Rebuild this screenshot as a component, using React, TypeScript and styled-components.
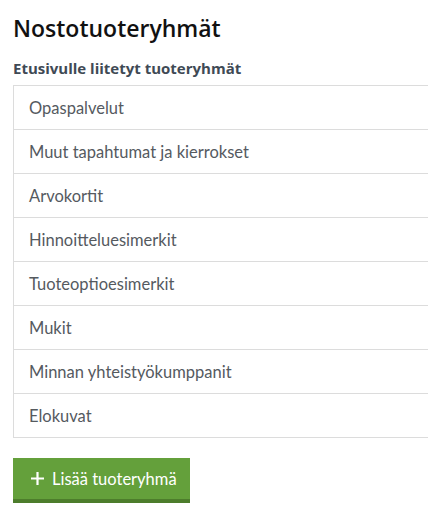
import React from 'react'
import styled, { createGlobalStyle } from 'styled-components'

const GlobalStyle = createGlobalStyle`
    body {
        margin: 0;
        background: #ffffff;
        font-family: "Open Sans", "Noto Sans", sans-serif;
    }
`

const Page = styled.div`
    padding: 12px 0 0 13px;
    width: 428px;
    box-sizing: border-box;
    overflow: hidden;
`

const Title = styled.h2`
    margin: 0;
    font-size: 23px;
    font-weight: 600;
    line-height: 32px;
    color: #111111;
`

const SubTitle = styled.h4`
    margin: 14px 0 0;
    font-size: 15px;
    font-weight: 700;
    line-height: 20px;
    color: #3f4a55;
`

const GroupList = styled.ul`
    list-style: none;
    margin: 7px 0 0;
    padding: 0;
    width: 440px;
    border-top: 1px solid #dcdcdc;
    border-left: 1px solid #dcdcdc;
`

const GroupItem = styled.li`
    height: 43px;
    display: flex;
    align-items: center;
    padding-left: 15px;
    border-bottom: 1px solid #dcdcdc;
    font-family: Lato, "Open Sans", sans-serif;
    font-size: 16.5px;
    color: #555a5f;
`

const AddButton = styled.button`
    margin-top: 20px;
    height: 45px;
    width: 177px;
    display: flex;
    align-items: center;
    gap: 8px;
    padding: 0 0 0 18px;
    background: #64a03b;
    border: none;
    border-bottom: 4px solid #4d7d2c;
    color: #ffffff;
    font-family: Lato, "Open Sans", sans-serif;
    font-size: 16.5px;
    cursor: pointer;
`

const PlusIcon = styled.svg`
    width: 13px;
    height: 13px;
`

const groups = [
    'Opaspalvelut',
    'Muut tapahtumat ja kierrokset',
    'Arvokortit',
    'Hinnoitteluesimerkit',
    'Tuoteoptioesimerkit',
    'Mukit',
    'Minnan yhteistyökumppanit',
    'Elokuvat',
]

const App: React.FC = () => {
    return (
        <>
            <GlobalStyle />
            <Page>
                <Title>Nostotuoteryhmät</Title>
                <SubTitle>Etusivulle liitetyt tuoteryhmät</SubTitle>
                <GroupList>
                    {groups.map((g) => (
                        <GroupItem key={g}>{g}</GroupItem>
                    ))}
                </GroupList>
                <AddButton>
                    <PlusIcon viewBox="0 0 13 13">
                        <path d="M6.5 0v13M0 6.5h13" stroke="#fff" strokeWidth="2.2" />
                    </PlusIcon>
                    Lisää tuoteryhmä
                </AddButton>
            </Page>
        </>
    )
}

export default App
